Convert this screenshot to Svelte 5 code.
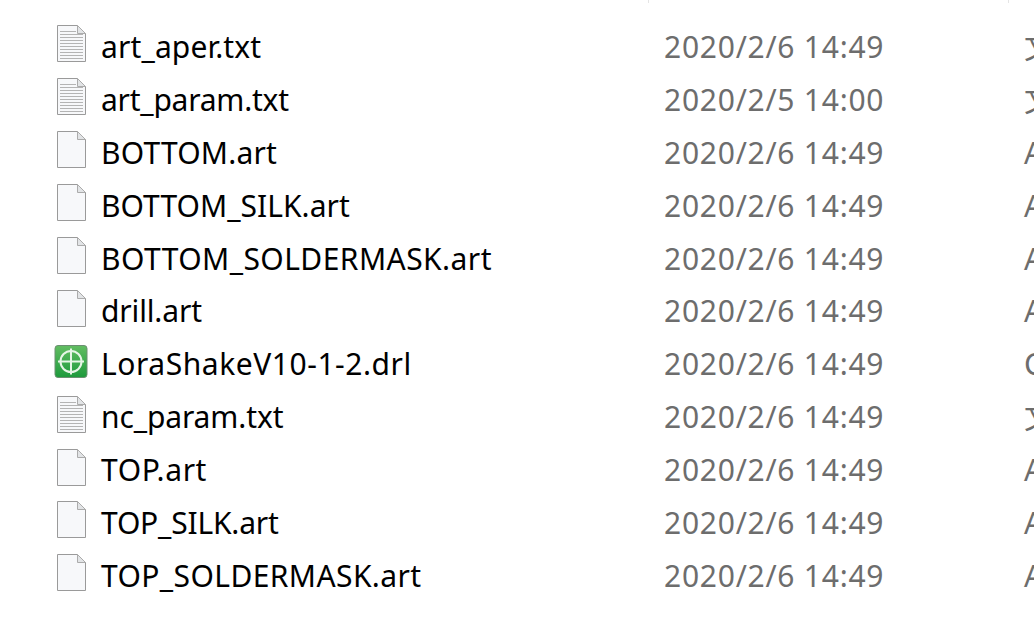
<script lang="ts">
type FileRow = { name: string; date: string; type: string; icon: 'text' | 'blank' | 'drl'; track: number };

// track: per-name letter spacing so the widths line up with the original font
const files: FileRow[] = [
	{ name: 'art_aper.txt', date: '2020/2/6 14:49', type: '文本文档', icon: 'text', track: 0.13 },
	{ name: 'art_param.txt', date: '2020/2/5 14:00', type: '文本文档', icon: 'text', track: -0.24 },
	{ name: 'BOTTOM.art', date: '2020/2/6 14:49', type: 'ART 文件', icon: 'blank', track: 0.2 },
	{ name: 'BOTTOM_SILK.art', date: '2020/2/6 14:49', type: 'ART 文件', icon: 'blank', track: 0.03 },
	{ name: 'BOTTOM_SOLDERMASK.art', date: '2020/2/6 14:49', type: 'ART 文件', icon: 'blank', track: 0.44 },
	{ name: 'drill.art', date: '2020/2/6 14:49', type: 'ART 文件', icon: 'blank', track: -0.14 },
	{ name: 'LoraShakeV10-1-2.drl', date: '2020/2/6 14:49', type: 'CAM350', icon: 'drl', track: 0.55 },
	{ name: 'nc_param.txt', date: '2020/2/6 14:49', type: '文本文档', icon: 'text', track: -0.12 },
	{ name: 'TOP.art', date: '2020/2/6 14:49', type: 'ART 文件', icon: 'blank', track: 0.6 },
	{ name: 'TOP_SILK.art', date: '2020/2/6 14:49', type: 'ART 文件', icon: 'blank', track: -0.2 },
	{ name: 'TOP_SOLDERMASK.art', date: '2020/2/6 14:49', type: 'ART 文件', icon: 'blank', track: 0.4 }
];

const lines = [6, 9, 12, 15, 18, 21, 24, 27, 30, 33];
</script>

<div class="explorer">
	<div class="seps"><span></span><span></span></div>
	<ul class="list">
		{#each files as file}
			<li class="row">
				<span class="icon">
					{#if file.icon === 'drl'}
						<svg width="36" height="36" viewBox="0 0 36 36">
							<defs>
								<linearGradient id="drl-bg" x1="0" y1="0" x2="0" y2="1">
									<stop offset="0" stop-color="#62bd62" />
									<stop offset="1" stop-color="#1d9a3c" />
								</linearGradient>
							</defs>
							<rect x="3" y="1.5" width="32" height="32" rx="3" fill="url(#drl-bg)" stroke="#6c8f72" />
							<circle cx="19" cy="17.5" r="10.5" fill="none" stroke="#e6f5e6" stroke-width="2" />
							<path d="M19 4.5v26M6 17.5h26" stroke="#e6f5e6" stroke-width="2" />
						</svg>
					{:else}
						<svg width="36" height="38" viewBox="0 0 36 38">
							<path d="M5.5 .5H25.5L33.5 8.5V36.5H5.5Z" fill="#f7f8fa" stroke="#9a9a9a" />
							<path d="M25.5 .5V8.5H33.5Z" fill="#e2e4e6" stroke="#ababab" />
							{#if file.icon === 'text'}
								{#each lines as y}
									<path d="M8 {y + 0.5}H{y < 9 ? 24 : 31}" stroke="#b4b4b4" />
								{/each}
							{/if}
						</svg>
					{/if}
				</span>
				<span class="name" style="letter-spacing: {file.track}px">{file.name}</span>
				<span class="date">{file.date}</span>
				<span class="type">{file.type}</span>
			</li>
		{/each}
	</ul>
</div>

<style>
	:global(body) {
		background: #fff;
		overflow: hidden;
	}
	.explorer {
		width: 1034px;
		height: 618px;
		overflow: hidden;
		position: relative;
		font-family: "Noto Sans", "Noto Sans CJK SC", sans-serif;
	}
	.seps span {
		position: absolute;
		top: 0;
		width: 1px;
		height: 3px;
		background: #e5e5e5;
		left: 648px;
	}
	.seps span + span {
		left: 1008px;
	}
	.list {
		list-style: none;
		margin: 0;
		padding: 18px 0 0 0;
	}
	.row {
		display: grid;
		grid-template-columns: 49px 563px 360px 60px;
		align-items: center;
		height: 52.9px;
		padding-left: 52px;
		font-size: 30px;
		line-height: 40px;
		white-space: nowrap;
	}
	.icon {
		display: flex;
		align-items: center;
		height: 38px;
	}
	.name,
	.date,
	.type {
		padding-top: 5px;
	}
	.name {
		color: #000;
	}
	.date {
		color: #6d6d6d;
		letter-spacing: 0.75px;
	}
	.type {
		color: #6d6d6d;
	}
</style>
